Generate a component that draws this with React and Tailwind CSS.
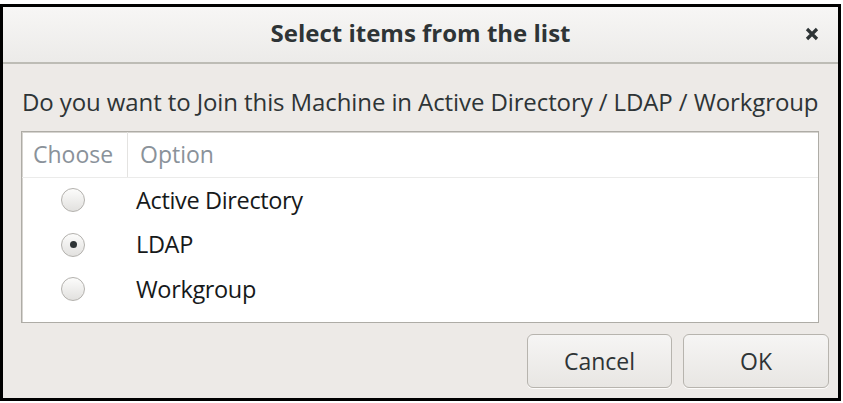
import React from "react";

function Radio({ checked }) {
  return (
    <div className="w-[24px] h-[24px] rounded-full border border-[#b3b1ad] bg-gradient-to-b from-[#fcfcfb] to-[#e2e1df] shadow-[0_1px_0_rgba(255,255,255,0.8)] flex items-center justify-center">
      {checked && <div className="w-[7px] h-[7px] rounded-full bg-[#2e3436]" />}
    </div>
  );
}

function Row({ label, checked }) {
  return (
    <div className="flex items-center h-[44.5px]">
      <div className="w-[106px] flex justify-center">
        <div className="ml-[-4px]">
          <Radio checked={checked} />
        </div>
      </div>
      <div className="pl-[8px] text-[23.5px] font-medium text-[#16191a] leading-none tracking-[-0.35px]">{label}</div>
    </div>
  );
}

export default function App() {
  return (
    <div
      className="w-[843px] h-[403px] bg-white overflow-hidden"
      style={{ fontFamily: '"Open Sans", "Noto Sans", sans-serif' }}
    >
      <div className="mt-[4px] w-[841px] h-[397px] border-[3px] border-black bg-[#edeae7] flex flex-col">
        {/* title bar */}
        <div className="h-[55px] bg-gradient-to-b from-[#f7f6f5] to-[#ecebe9] flex items-center relative">
          <div className="flex-1 text-center text-[24px] leading-none font-bold text-[#2e3436] pb-[3px]">
            Select items from the list
          </div>
          <div className="absolute right-[19px] top-[20px]">
            <svg width="14" height="14" viewBox="0 0 14 14">
              <path d="M2 2 L12 12 M12 2 L2 12" stroke="#2e3436" strokeWidth="3.2" strokeLinecap="butt" />
            </svg>
          </div>
        </div>
        <div className="h-[2px] bg-[#bdbcb5]" />
        {/* body */}
        <div className="flex-1 flex flex-col px-[18px] pt-[26px]">
          <div className="h-[24px] leading-[24px] text-[24px] text-[#2e3436] whitespace-nowrap pl-[1px] tracking-[-0.1px]">
            Do you want to Join this Machine in Active Directory / LDAP / Workgroup
          </div>
          <div className="mt-[17px] w-[798px] h-[192px] bg-white border border-[#aeaca6] shadow-[inset_1px_1px_0_#d6d4d0] flex flex-col">
            <div className="h-[46px] flex items-stretch border-b border-[#ebebea]">
              <div className="w-[106px] border-r border-[#e4e3e1] flex items-center pl-[11px] text-[23px] text-[#8a929a]">
                Choose
              </div>
              <div className="flex items-center pl-[12px] text-[23px] text-[#8a929a]">Option</div>
            </div>
            <Row label="Active Directory" />
            <Row label="LDAP" checked />
            <Row label="Workgroup" />
          </div>
          <div className="mt-[11px] flex justify-end gap-[11px] mr-[-9px]">
            <button className="w-[145px] h-[54px] rounded-[6px] border border-[#b7b4ae] bg-gradient-to-b from-[#f6f5f4] to-[#e8e6e3] text-[23px] text-[#2e3436] shadow-[0_1px_0_rgba(255,255,255,0.8)]">
              Cancel
            </button>
            <button className="w-[146px] h-[54px] rounded-[6px] border border-[#b7b4ae] bg-gradient-to-b from-[#f6f5f4] to-[#e8e6e3] text-[23px] text-[#2e3436] shadow-[0_1px_0_rgba(255,255,255,0.8)]">
              OK
            </button>
          </div>
        </div>
      </div>
    </div>
  );
}
